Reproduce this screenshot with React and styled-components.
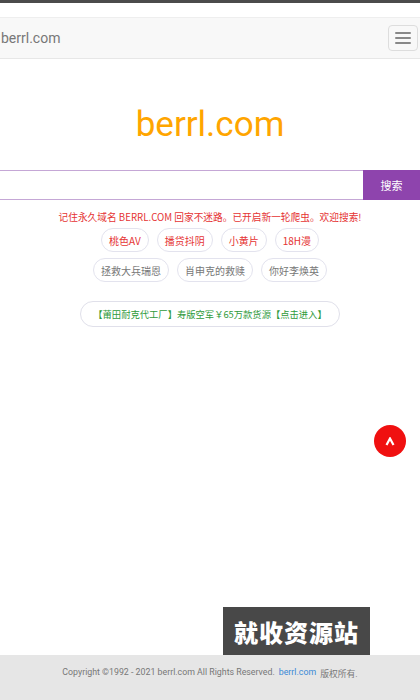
import React from "react";
import styled, { createGlobalStyle } from "styled-components";

const Global = createGlobalStyle`
  html, body { margin: 0; padding: 0; background: #fff; }
  body { font-family: Roboto, "Noto Sans CJK SC", sans-serif; }
  #root { min-height: 700px; }
`;

const Page = styled.div`
  width: 420px;
  height: 700px;
  display: flex;
  flex-direction: column;
  overflow: hidden;
`;

const TopStrip = styled.div`
  height: 3px;
  background: #4b4b4b;
  flex: none;
`;

const Navbar = styled.nav`
  margin-top: 14px;
  height: 40px;
  background: #f8f8f8;
  border-top: 1px solid #eeeeee;
  border-bottom: 1px solid #e7e7e7;
  display: flex;
  align-items: center;
  justify-content: space-between;
  padding: 0 2px 0 1px;
  flex: none;
`;

const Brand = styled.span`
  font-size: 14px;
  color: #777;
  font-family: Roboto, sans-serif;
`;

const Toggle = styled.button`
  width: 30px;
  height: 26px;
  border: 1px solid #ddd;
  border-radius: 4px;
  background: #f8f8f8;
  display: flex;
  flex-direction: column;
  align-items: center;
  justify-content: center;
  gap: 3px;
  padding: 0;
`;

const Bar = styled.span`
  display: block;
  width: 16px;
  height: 2px;
  background: #888;
  border-radius: 1px;
`;

const Title = styled.h1`
  margin: 45px 0 0;
  text-align: center;
  font-family: Roboto, sans-serif;
  font-weight: 400;
  font-size: 35px;
  line-height: 42px;
  color: #ffa500;
`;

const SearchRow = styled.form`
  margin-top: 24px;
  display: flex;
  height: 30px;
`;

const SearchInput = styled.input`
  flex: 1;
  min-width: 0;
  border: 0;
  border-top: 1px solid #c5a7d6;
  border-bottom: 1px solid #c5a7d6;
  outline: none;
  background: #fff;
  padding: 0 6px;
`;

const SearchButton = styled.button`
  width: 57px;
  border: 0;
  background: #8e44ad;
  color: #fff;
  font-size: 11px;
  font-family: "Noto Sans CJK SC", sans-serif;
  padding: 0;
`;

const Notice = styled.p`
  margin: 10px 0 0;
  text-align: center;
  font-size: 9.7px;
  line-height: 14px;
  color: #e53333;
  font-family: "Noto Sans CJK SC", sans-serif;
`;

const TagRow = styled.div`
  margin-top: ${(p) => p.$mt}px;
  display: flex;
  justify-content: center;
  gap: 8px;
`;

const Tag = styled.a`
  display: inline-flex;
  align-items: center;
  height: 22px;
  padding: 0 7px;
  border: 1px solid #e3e3ee;
  border-radius: 12px;
  font-size: 10px;
  font-family: "Noto Sans CJK SC", sans-serif;
  color: ${(p) => (p.$hot ? "#e53333" : "#777")};
  text-decoration: none;
  background: #fff;
`;

const PromoRow = styled.div`
  margin-top: 19px;
  display: flex;
  justify-content: center;
`;

const Promo = styled.a`
  display: inline-flex;
  align-items: center;
  height: 24px;
  padding: 0 12px;
  border: 1px solid #e0e0ea;
  border-radius: 13px;
  font-size: 9.3px;
  font-family: "Noto Sans CJK SC", sans-serif;
  color: #2e9a3a;
  text-decoration: none;
`;

const Spacer = styled.div`
  flex: 1;
  position: relative;
`;

const BackTop = styled.button`
  position: absolute;
  top: 98px;
  right: 14px;
  width: 32px;
  height: 32px;
  border-radius: 50%;
  border: 0;
  background: #f01010;
  display: flex;
  align-items: center;
  justify-content: center;
  padding: 0;
`;

const Badge = styled.div`
  position: absolute;
  bottom: 0;
  left: 223px;
  width: 147px;
  height: 48px;
  background: #484848;
  color: #fff;
  font-family: "Noto Sans CJK SC", sans-serif;
  font-weight: 900;
  font-size: 24px;
  letter-spacing: 1px;
  display: flex;
  align-items: center;
  justify-content: center;
`;

const Footer = styled.footer`
  height: 45px;
  background: #e6e6e6;
  flex: none;
  display: flex;
  align-items: flex-start;
  justify-content: center;
  padding-top: 12px;
  box-sizing: border-box;
  font-size: 8.8px;
  color: #777;
  font-family: Roboto, "Noto Sans CJK SC", sans-serif;
`;

const FooterLink = styled.a`
  color: #3a8ad6;
  text-decoration: none;
  margin: 0 4px;
`;

export default function App() {
  return (
    <Page>
      <Global />
      <TopStrip />
      <Navbar>
        <Brand>berrl.com</Brand>
        <Toggle aria-label="menu">
          <Bar />
          <Bar />
          <Bar />
        </Toggle>
      </Navbar>
      <Title>berrl.com</Title>
      <SearchRow onSubmit={(e) => e.preventDefault()}>
        <SearchInput />
        <SearchButton>搜索</SearchButton>
      </SearchRow>
      <Notice>记住永久域名 BERRL.COM 回家不迷路。已开启新一轮爬虫。欢迎搜索!</Notice>
      <TagRow $mt={4}>
        <Tag $hot>桃色AV</Tag>
        <Tag $hot>播贷抖阴</Tag>
        <Tag $hot>小黄片</Tag>
        <Tag $hot>18H漫</Tag>
      </TagRow>
      <TagRow $mt={6}>
        <Tag>拯救大兵瑞恩</Tag>
        <Tag>肖申克的救赎</Tag>
        <Tag>你好李焕英</Tag>
      </TagRow>
      <PromoRow>
        <Promo>【莆田耐克代工厂】寿版空军￥65万款货源【点击进入】</Promo>
      </PromoRow>
      <Spacer>
        <BackTop aria-label="top">
          <svg width="10" height="9" viewBox="0 0 10 9">
            <polyline points="1.5,8 5,1.5 8.5,8" fill="none" stroke="#fff" strokeWidth="2.2" strokeLinejoin="miter" />
          </svg>
        </BackTop>
        <Badge>就收资源站</Badge>
      </Spacer>
      <Footer>
        Copyright ©1992 - 2021 berrl.com All Rights Reserved.
        <FooterLink>berrl.com</FooterLink>版权所有.
      </Footer>
    </Page>
  );
}
